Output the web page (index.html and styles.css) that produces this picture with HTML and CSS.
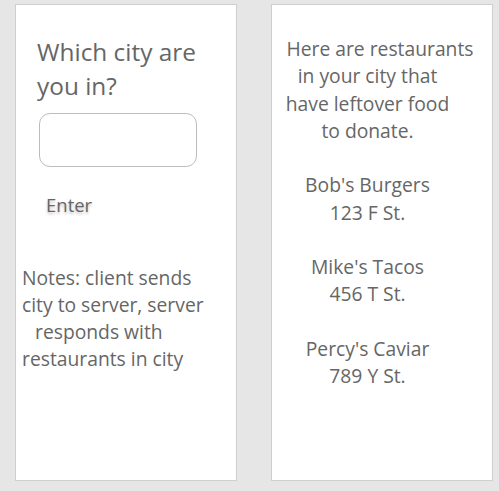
FILE: index.html
```html
<!DOCTYPE html>
<html>
<head>
<meta charset="utf-8">
<link rel="stylesheet" href="styles.css">
</head>
<body>
<div class="page">
  <section class="card card-left">
    <h1 class="question">Which city are<br>you in?</h1>
    <input class="city-input" type="text">
    <button class="enter-btn">Enter</button>
    <p class="notes">Notes: client sends<br>city to server, server<br><span class="indent">responds with</span><br>restaurants in city</p>
  </section>
  <section class="card card-right">
    <p class="results"><span class="first">Here are restaurants</span><br>in your city that<br>have leftover food<br>to donate.<br><br>Bob's Burgers<br>123 F St.<br><br>Mike's Tacos<br>456 T St.<br><br>Percy's Caviar<br>789 Y St.</p>
  </section>
</div>
</body>
</html>
```
FILE: styles.css
```css
html, body {
  margin: 0;
  padding: 0;
  background: #e6e6e6;
}
body {
  font-family: "Open Sans", "Noto Sans", sans-serif;
  color: #666666;
}
.page {
  display: flex;
  gap: 34px;
  padding: 4px 0 0 15px;
}
.card {
  box-sizing: border-box;
  width: 222px;
  height: 477px;
  background: #ffffff;
  border: 1px solid #cfcfcf;
}
.card-left {
  display: flex;
  flex-direction: column;
  align-items: flex-start;
}
.question {
  margin: 30px 0 0 21px;
  font-size: 24.4px;
  font-weight: normal;
  line-height: 34px;
  white-space: nowrap;
}
.city-input {
  box-sizing: border-box;
  margin: 10px 0 0 23px;
  width: 158px;
  height: 54px;
  border: 1px solid #bdbdbd;
  border-radius: 11px;
  outline: none;
}
.enter-btn {
  margin: 25px 0 0 30px;
  padding: 0;
  border: none;
  background: none;
  font-family: inherit;
  font-size: 18.5px;
  color: #666666;
  text-shadow: 0 2px 3px rgba(0,0,0,0.25);
}
.notes {
  margin: 47px 0 0 6px;
  font-size: 19.3px;
  line-height: 27px;
  white-space: nowrap;
}
.indent {
  padding-left: 13px;
}
.results {
  margin: 30px 0 0 0;
  padding-right: 29px;
  text-align: center;
  font-size: 19.3px;
  line-height: 27.25px;
  white-space: nowrap;
}
.first {
  display: inline-block;
  margin-right: -25px;
}
```
